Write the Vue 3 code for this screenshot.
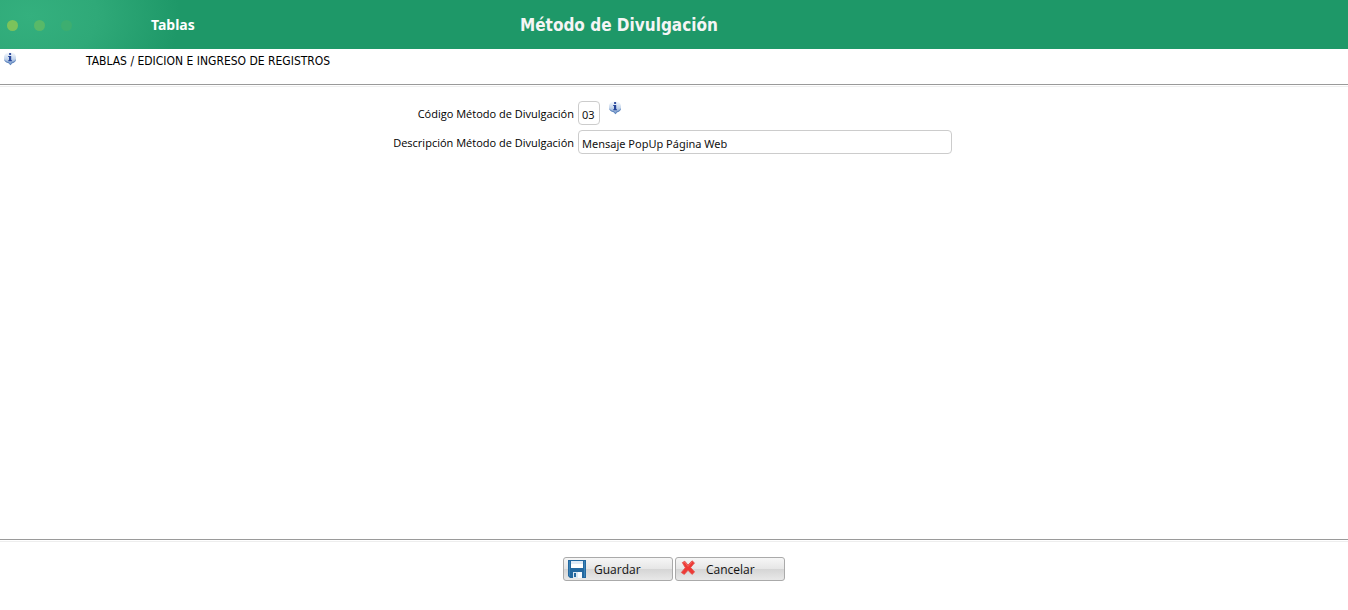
<script setup>
import { ref } from 'vue'

const code = ref('03')
const description = ref('Mensaje PopUp Página Web')
</script>

<template>
  <div class="page">
    <header class="banner">
      <div class="brand">
        <span class="dot"></span>
        <span class="dot mid"></span>
        <span class="dot faint"></span>
        <span class="module">Tablas</span>
      </div>
      <h1>Método de Divulgación</h1>
    </header>

    <svg class="defs" aria-hidden="true">
      <defs>
        <linearGradient id="bubble" x1="0" y1="0" x2="0" y2="1">
          <stop offset="0" stop-color="#f6f9fd" />
          <stop offset="0.5" stop-color="#c5d6ec" />
          <stop offset="1" stop-color="#6a8fc4" />
        </linearGradient>
        <symbol id="info" viewBox="0 0 14 14">
          <path d="M7 .6C10.800 .6 13 2.600 13 5.500V8C12.400 10 10.600 10.900 9 11.300L7.500 13.200 5.800 11.200C3.500 10.800 1.600 9.800 1 7.800V5.500C1 2.600 3.200 .6 7 .6z" fill="url(#bubble)" />
          <path d="M1.200 7.500C3 9.700 5 9.900 5.800 10L7.500 12 8.900 10.100C10.500 9.800 12 9 12.800 7.300V8.200C12.200 10 10.600 10.900 9 11.300L7.500 13.200 5.800 11.200C3.500 10.800 1.700 9.800 1.200 7.500z" fill="#6288bf" />
          <rect x="6" y="1" width="2.200" height="2" rx=".8" fill="#26459a" />
          <path d="M5.200 4H8.200V8.200H9V9.200H5.200V8.200H6V5H5.200z" fill="#26459a" />
        </symbol>
      </defs>
    </svg>

    <div class="crumb">
      <svg class="info"><use href="#info" /></svg>
      <span>TABLAS / EDICION E INGRESO DE REGISTROS</span>
    </div>

    <form class="sheet" @submit.prevent>
      <div class="fields">
        <label for="code">Código Método de Divulgación</label>
        <div class="cell">
          <input id="code" v-model="code" class="short" maxlength="2" />
          <svg class="info"><use href="#info" /></svg>
        </div>
        <label for="description">Descripción Método de Divulgación</label>
        <div class="cell">
          <input id="description" v-model="description" class="long" />
        </div>
      </div>
      <div class="actions">
        <button type="submit">
          <svg class="icon" viewBox="0 0 18 18">
            <path d="M0 0h18v18H2L0 16z" fill="#2368a0" />
            <path d="M1 1h1v15H1zM16 1h1v16h-1z" fill="#3c83b6" />
            <rect x="3" y="1" width="12" height="7" fill="#dfeaf6" />
            <rect x="3" y="4" width="12" height="4" fill="#ffffff" />
            <path d="M5 12h9v6H5z" fill="#dbe7f2" />
            <path d="M6 13h2v4H6z" fill="#2368a0" />
            <path d="M10 12h4v6h-4z" fill="#f7fbff" />
          </svg>
          <span>Guardar</span>
        </button>
        <button type="button">
          <svg class="icon" viewBox="0 0 18 18">
            <path d="M2.300 2.600 4.800 1.200 8 5.100 12 .8 14.500 2.900 10.700 7.500 14.600 12 12 14.400 8 10.300 4.300 14.400 1.300 12.500 5.300 7.700z" fill="#ee3935" stroke="#e0504b" stroke-width=".8" stroke-linejoin="round" />
            <path d="M3.300 2.900 4.700 2.200 8 6.400 12 2" fill="none" stroke="#f7716b" stroke-width=".8" />
          </svg>
          <span>Cancelar</span>
        </button>
      </div>
    </form>
  </div>
</template>

<style>
body {
  margin: 0;
  background: #fff;
}
</style>

<style scoped>
.page {
  display: flex;
  flex-direction: column;
  min-height: 100vh;
  font: 12px/16px "DejaVu Sans Condensed", "Noto Sans", sans-serif;
  color: #000;
}
.banner {
  display: grid;
  grid-template-columns: 520px 1fr;
  align-items: center;
  height: 49px;
  background: radial-gradient(ellipse 150px 100px at 30px 16px, #34b07e 0%, #2fa978 45%, #1e9868 100%);
  color: #fff;
}
.brand {
  display: flex;
  align-items: center;
  gap: 16px;
  padding-left: 7px;
}
.dot {
  width: 11px;
  height: 11px;
  margin-top: 2px;
  border-radius: 50%;
  background: #7cc35b;
}
.mid {
  background: #58b968;
}
.faint {
  background: #3dae70;
}
.module {
  margin-left: 63px;
  font: bold 14px/20px "Noto Sans", sans-serif;
}
h1 {
  margin: 0;
  font: bold 17px/24px "DejaVu Sans Condensed", sans-serif;
  color: #f5f5f5;
}
.defs {
  position: absolute;
  width: 0;
  height: 0;
}
.info {
  flex: none;
  width: 14px;
  height: 14px;
}
.crumb {
  display: flex;
  gap: 69px;
  height: 29px;
  padding: 3px;
}
.crumb span {
  padding-top: 1px;
}
.sheet {
  flex: 1;
  display: flex;
  flex-direction: column;
  border-top: 1px solid #9a9a9a;
  box-shadow: inset 0 1px #fff, inset 0 2px #eee;
}
.fields {
  flex: 1;
  display: grid;
  grid-template-columns: 574px 1fr;
  align-content: start;
  align-items: center;
  gap: 5px 4px;
  padding-top: 16px;
}
label {
  padding-top: 2px;
  font: 11px/16px "Open Sans", sans-serif;
  text-align: right;
}
.cell {
  display: flex;
  gap: 8px;
}
input {
  box-sizing: border-box;
  height: 24px;
  padding: 3px 3px 0;
  border: 1px solid #ccc;
  border-radius: 4px;
  background: #fff;
  font: 11px "Noto Sans", sans-serif;
  color: #111;
}
.short {
  width: 22px;
}
.long {
  width: 374px;
}
.actions {
  display: flex;
  justify-content: center;
  gap: 2px;
  padding: 17px 0 29px;
  border-top: 1px solid #9a9a9a;
  box-shadow: inset 0 1px #fff, inset 0 2px #eee;
}
button {
  display: flex;
  align-items: center;
  gap: 8px;
  box-sizing: border-box;
  width: 110px;
  height: 24px;
  padding: 0 4px;
  border: 1px solid #aaa;
  border-radius: 3px;
  background: linear-gradient(#f6f6f6, #e6e6e6 50%, #d5d5d5 51%, #e8e8e8);
  font: 12px "Open Sans", sans-serif;
  color: #111;
}
.icon {
  flex: none;
  width: 18px;
  height: 18px;
}
</style>
